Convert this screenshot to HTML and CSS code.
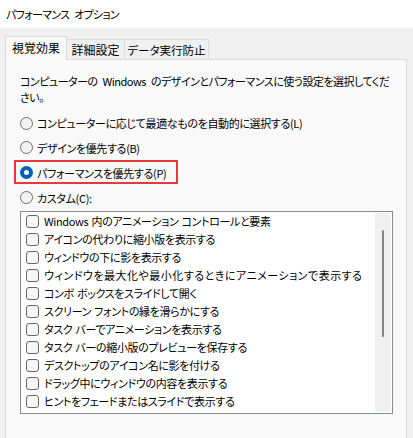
FILE: index.html
```html
<!DOCTYPE html>
<html lang="ja">
<head>
<meta charset="utf-8">
<title>パフォーマンス オプション</title>
<link rel="stylesheet" href="styles.css">
</head>
<body>
<div class="window">
  <div class="titlebar">パフォーマンス オプション</div>
  <div class="client">
    <div class="tabs">
      <div class="tab active">視覚効果</div>
      <div class="tab t2">詳細設定</div>
      <div class="tab t3">データ実行防止</div>
    </div>
    <div class="panel">
      <p class="desc">コンピューターの Windows のデザインとパフォーマンスに使う設定を選択してくだ<br>さい。</p>
      <div class="radios">
        <div class="radio-row r1"><span class="radio"></span><span>コンピューターに応じて最適なものを自動的に選択する(L)</span></div>
        <div class="radio-row r2"><span class="radio"></span><span>デザインを優先する(B)</span></div>
        <div class="radio-row r3 highlight"><span class="radio checked"></span><span>パフォーマンスを優先する(P)</span></div>
        <div class="radio-row r4"><span class="radio"></span><span>カスタム(C):</span></div>
      </div>
      <div class="listbox">
        <div class="items">
          <div class="item"><span class="check"></span><span>Windows 内のアニメーション コントロールと要素</span></div>
          <div class="item"><span class="check"></span><span>アイコンの代わりに縮小版を表示する</span></div>
          <div class="item"><span class="check"></span><span>ウィンドウの下に影を表示する</span></div>
          <div class="item"><span class="check"></span><span class="wide">ウィンドウを最大化や最小化するときにアニメーションで表示する</span></div>
          <div class="item"><span class="check"></span><span>コンボ ボックスをスライドして開く</span></div>
          <div class="item"><span class="check"></span><span>スクリーン フォントの縁を滑らかにする</span></div>
          <div class="item"><span class="check"></span><span>タスク バーでアニメーションを表示する</span></div>
          <div class="item"><span class="check"></span><span>タスク バーの縮小版のプレビューを保存する</span></div>
          <div class="item"><span class="check"></span><span>デスクトップのアイコン名に影を付ける</span></div>
          <div class="item"><span class="check"></span><span>ドラッグ中にウィンドウの内容を表示する</span></div>
          <div class="item"><span class="check"></span><span>ヒントをフェードまたはスライドで表示する</span></div>
          <div class="item"><span class="check"></span><span>マウス ポインターの下に影を表示する</span></div>
        </div>
        <div class="scrollbar"><div class="thumb"></div></div>
      </div>
    </div>
  </div>
</div>
</body>
</html>
```
FILE: styles.css
```css
html, body {
  margin: 0;
  padding: 0;
}
body {
  width: 413px;
  height: 438px;
  overflow: hidden;
  background: #f0f0f0;
  font-family: "Noto Sans CJK JP", "Noto Sans", sans-serif;
  font-size: 11px;
  letter-spacing: -0.35px;
  word-spacing: 1px;
  color: #000;
  font-feature-settings: "palt";
}
.window {
  width: 413px;
  height: 438px;
  display: flex;
  flex-direction: column;
}
.titlebar {
  height: 28px;
  background: #ffffff;
  padding-left: 6px;
  line-height: 28px;
  box-sizing: border-box;
  letter-spacing: -0.7px;
  word-spacing: 3px;
}
.client {
  flex: 1;
  background: #f0f0f0;
  padding-top: 8px;
}
.tabs {
  display: flex;
  align-items: flex-end;
  padding-left: 5px;
  height: 23px;
  position: relative;
  z-index: 1;
}
.tab {
  height: 20px;
  box-sizing: border-box;
  border: 1px solid #dddddd;
  border-bottom: none;
  background: #f0f0f0;
  text-align: center;
  line-height: 20px;
  font-size: 12px;
  letter-spacing: 0;
}
.tab.active {
  height: 24px;
  width: 62px;
  background: #f9f9f9;
  line-height: 22px;
  margin-bottom: -1px;
  border-color: #d9d9d9;
}
.tab.t2 {
  width: 58px;
  border-left: none;
}
.tab.t3 {
  width: 84px;
  border-left: none;
  font-size: 11.5px;
}
.panel {
  margin-left: 5px;
  width: 402px;
  height: 400px;
  box-sizing: border-box;
  border: 1px solid #dadada;
  background: #f9f9f9;
  padding: 13px 14px 0 14px;
}
.desc {
  margin: 0;
  line-height: 16px;
  letter-spacing: -0.5px;
  word-spacing: 3px;
}
.radios {
  margin-top: 6px;
  display: flex;
  flex-direction: column;
}
.radio-row {
  display: flex;
  align-items: center;
  gap: 4px;
  height: 25px;
}
.radio-row.r1 {
  height: 24px;
}
.radio {
  width: 13px;
  height: 13px;
  box-sizing: border-box;
  border-radius: 50%;
  border: 1px solid #6e6e6e;
  background: #f3f3f3;
  flex: none;
}
.radio.checked {
  border: 4px solid #005fb8;
  background: #ffffff;
}
.highlight {
  position: relative;
}
.highlight::after {
  content: "";
  position: absolute;
  left: -6px;
  top: 0;
  width: 164px;
  height: 24px;
  box-sizing: border-box;
  border: 2px solid #e8383d;
}
.listbox {
  margin-top: 1px;
  width: 373px;
  height: 203px;
  box-sizing: border-box;
  border: 1px solid #858a98;
  background: #ffffff;
  display: flex;
}
.items {
  flex: 1;
  overflow: hidden;
  padding-left: 5px;
}
.item {
  display: flex;
  align-items: center;
  gap: 5px;
  height: 18px;
  white-space: nowrap;
}
.wide {
  letter-spacing: 0.5px;
}
.check {
  width: 13px;
  height: 13px;
  box-sizing: border-box;
  border: 1px solid #666666;
  border-radius: 3px;
  background: #f7f7f7;
  flex: none;
}
.scrollbar {
  width: 16px;
  margin: 1px 1px 1px 0;
  background: #f0f0f0;
  flex: none;
}
.thumb {
  margin-top: 17px;
  margin-left: 7px;
  width: 2px;
  height: 107px;
  border-radius: 1px;
  background: #858585;
}
```
